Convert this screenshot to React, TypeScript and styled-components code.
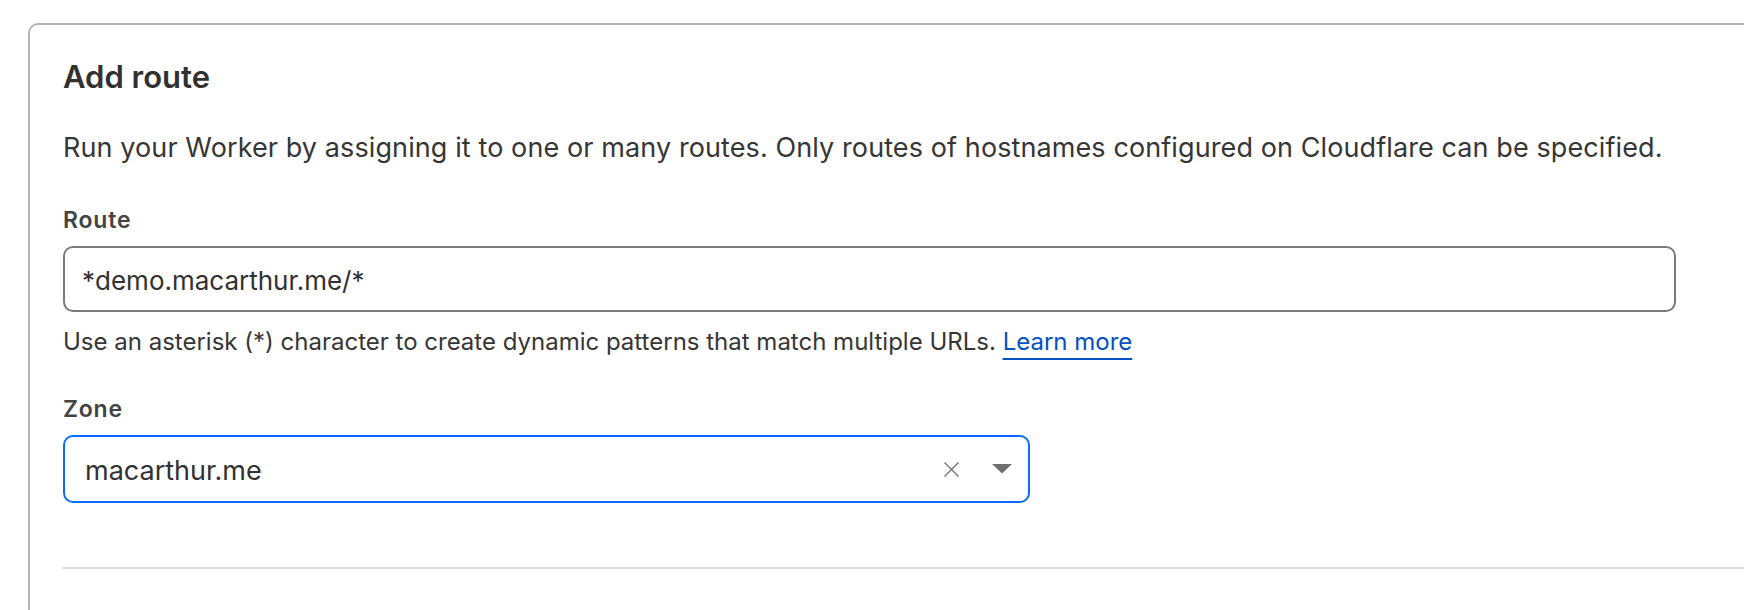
import React from "react";
import styled, { createGlobalStyle } from "styled-components";

const GlobalStyle = createGlobalStyle`
  html, body {
    margin: 0;
    padding: 0;
    background: #ffffff;
    overflow: hidden;
  }
  body {
    font-family: Inter, "Noto Sans", "Liberation Sans", sans-serif;
    -webkit-font-smoothing: antialiased;
  }
`;

const Page = styled.div`
  width: 1744px;
  height: 610px;
  overflow: hidden;
  padding: 23px 0 0 28px;
  box-sizing: border-box;
`;

const Card = styled.section`
  width: 1800px;
  min-height: 700px;
  box-sizing: border-box;
  border: 2px solid #b4b4b4;
  border-radius: 10px;
  padding: 34px 0 0 33px;
  background: #ffffff;
`;

const Title = styled.h2`
  margin: 0;
  font-size: 31px;
  line-height: 36px;
  font-weight: 600;
  color: #313131;
`;

const Description = styled.p`
  margin: 37px 0 0;
  font-size: 27px;
  line-height: 32px;
  letter-spacing: 0.1px;
  color: #363636;
`;

const Field = styled.div<{ $gap: number }>`
  margin-top: ${(p) => p.$gap}px;
  display: flex;
  flex-direction: column;
`;

const Label = styled.label`
  font-size: 23px;
  line-height: 28px;
  font-weight: 600;
  letter-spacing: 0.8px;
  color: #444444;
  margin-bottom: 12px;
`;

const TextInput = styled.div`
  width: 1613px;
  height: 66px;
  box-sizing: border-box;
  border: 2px solid #7a7a7a;
  border-radius: 10px;
  display: flex;
  align-items: center;
  padding: 4px 0 0 17px;
  font-size: 26px;
  line-height: 32px;
  color: #313131;
`;

const Helper = styled.p`
  margin: 15px 0 0;
  font-size: 24px;
  line-height: 30px;
  color: #363636;
`;

const Link = styled.a`
  color: #0051c3;
  text-decoration: underline;
  text-decoration-thickness: 2px;
  text-underline-offset: 8px;
`;

const Select = styled.div`
  width: 967px;
  height: 68px;
  box-sizing: border-box;
  border: 2px solid #0a6cff;
  border-radius: 10px;
  display: flex;
  align-items: center;
  padding: 4px 15px 0 20px;
  font-size: 27px;
  line-height: 32px;
  color: #313131;
`;

const SelectValue = styled.span`
  flex: 1;
`;

const IconBox = styled.span<{ $width: number; $gap?: number }>`
  display: inline-flex;
  align-items: center;
  justify-content: center;
  width: ${(p) => p.$width}px;
  height: 20px;
  margin-top: -4px;
  margin-left: ${(p) => p.$gap ?? 0}px;
`;

const Divider = styled.hr`
  margin: 64px 0 0;
  border: none;
  height: 2px;
  background: #d9d9d9;
`;

export default function App() {
  return (
    <>
      <GlobalStyle />
      <Page>
        <Card>
          <Title>Add route</Title>
          <Description>
            Run your Worker by assigning it to one or many routes. Only routes of hostnames configured on Cloudflare can be specified.
          </Description>
          <Field $gap={42}>
            <Label>Route</Label>
            <TextInput>*demo.macarthur.me/*</TextInput>
          </Field>
          <Helper>
            Use an asterisk (*) character to create dynamic patterns that match multiple URLs.{" "}
            <Link href="#">Learn more</Link>
          </Helper>
          <Field $gap={38}>
            <Label>Zone</Label>
            <Select>
              <SelectValue>macarthur.me</SelectValue>
              <IconBox $width={20}>
                <svg width="15" height="15" viewBox="0 0 15 15" fill="none">
                  <path d="M0.5 0.5L14.5 14.5M14.5 0.5L0.5 14.5" stroke="#707070" strokeWidth="1.3" />
                </svg>
              </IconBox>
              <IconBox $width={22} $gap={30}>
                <svg width="20" height="10" viewBox="0 0 20 10">
                  <path d="M0 0H20L10 9.5Z" fill="#6f6f6f" />
                </svg>
              </IconBox>
            </Select>
          </Field>
          <Divider />
        </Card>
      </Page>
    </>
  );
}
